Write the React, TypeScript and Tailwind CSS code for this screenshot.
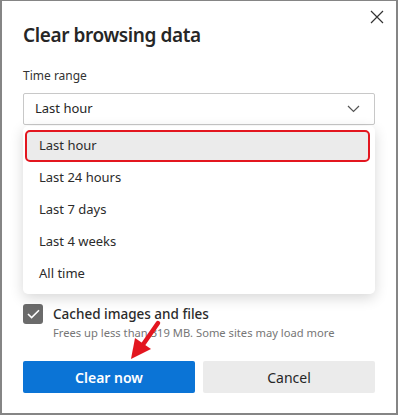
import React from "react";

const options = ["Last hour", "Last 24 hours", "Last 7 days", "Last 4 weeks", "All time"];

export default function App() {
  return (
    <div
      className="relative w-[398px] h-[415px] bg-white border-[#858585] border-t border-l-2 border-r-2 border-b-2 text-[#1f1f1f] overflow-hidden"
      style={{ fontFamily: '"Noto Sans", "Open Sans", sans-serif' }}
    >
      <button className="absolute top-[8px] right-[11px] w-[16px] h-[16px] flex items-center justify-center">
        <svg width="14" height="14" viewBox="0 0 14 14">
          <path d="M1 1L13 13M13 1L1 13" stroke="#333" strokeWidth="1.2" />
        </svg>
      </button>

      <div className="px-[21px] pt-[20px]">
        <h1 className="text-[19px] leading-[28px] font-semibold tracking-[-0.4px] text-[#262626]">
          Clear browsing data
        </h1>

        <div className="mt-[19px] text-[12px] leading-[16px] text-[#333]">Time range</div>

        <div className="relative mt-[9px]">
          <div className="h-[32px] border border-[#c8c8c8] rounded-[2px] flex items-center justify-between pl-[11px] pr-[14px] text-[13px] text-[#262626]">
            <span>Last hour</span>
            <svg width="13" height="8" viewBox="0 0 13 8">
              <path d="M1 1L6.5 6.5L12 1" stroke="#555" strokeWidth="1.2" fill="none" />
            </svg>
          </div>

          <div className="absolute left-0 right-0 top-[33px] h-[168px] bg-white rounded-[5px] shadow-[0_4px_14px_rgba(0,0,0,0.16)] pt-[4px] px-[2px] flex flex-col z-10">
            {options.map((o, i) => (
              <div
                key={o}
                className={
                  i === 0
                    ? "h-[32px] mr-[3px] flex items-center pl-[12px] text-[13px] text-[#2b2b2b] bg-[#ebebeb] rounded-[5px] border-[2px] border-[#e3161f]"
                    : "h-[32px] flex items-center pl-[14px] text-[13px] text-[#2b2b2b]"
                }
              >
                {o}
              </div>
            ))}
          </div>
        </div>

        <div className="mt-[179px] flex gap-[10px]">
          <div className="w-[20px] h-[20px] rounded-[3px] bg-[#6b6b6b] flex items-center justify-center shrink-0">
            <svg width="13" height="10" viewBox="0 0 13 10">
              <path d="M1 5L4.6 8.6L12 1.2" stroke="white" strokeWidth="1.6" fill="none" />
            </svg>
          </div>
          <div>
            <div className="text-[13.5px] leading-[20px] font-medium text-[#2b2b2b]">Cached images and files</div>
            <div className="mt-[1px] text-[11.2px] leading-[16px] text-[#767676]">Frees up less than 319 MB. Some sites may load more</div>
          </div>
        </div>

        <div className="mt-[20px] flex gap-[8px]">
          <button className="w-[172px] h-[32px] rounded-[2px] bg-[#0b74d6] text-white text-[14px] font-semibold">
            Clear now
          </button>
          <button className="w-[172px] h-[32px] rounded-[2px] bg-[#ebebeb] text-[#262626] text-[14px]">
            Cancel
          </button>
        </div>
      </div>

      <svg className="absolute left-[124px] top-[318px] z-20" width="40" height="46" viewBox="0 0 40 46">
        <path d="M32 4L16 27" stroke="#e3161f" strokeWidth="4.5" strokeLinecap="round" />
        <path d="M5 40L9 19L25 30Z" fill="#e3161f" />
      </svg>
    </div>
  );
}
